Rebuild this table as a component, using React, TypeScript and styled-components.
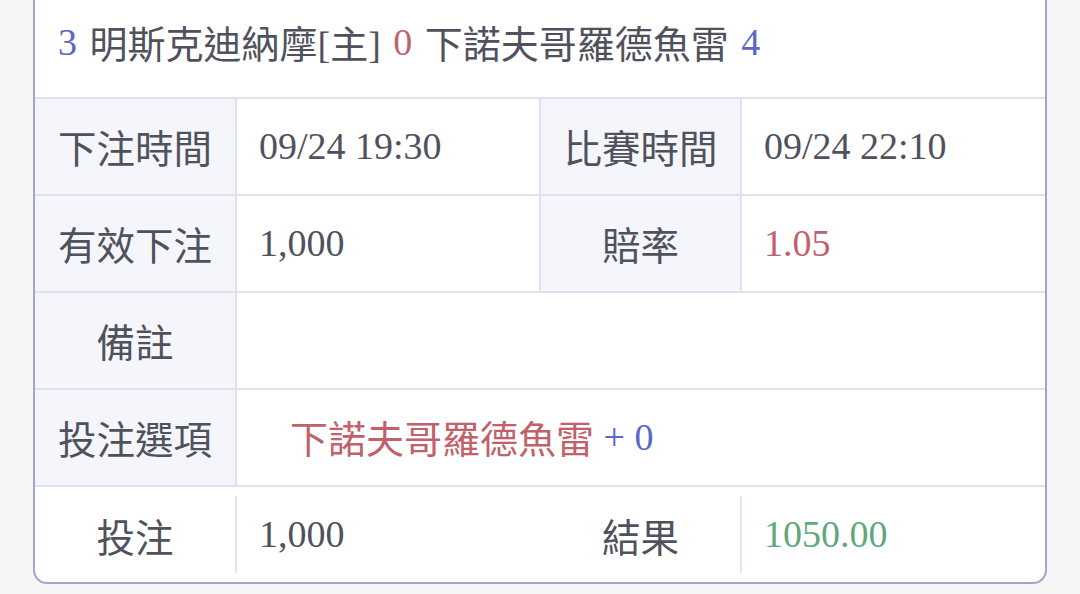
import styled, {createGlobalStyle} from 'styled-components';

const GlobalStyle = createGlobalStyle`
    body {
        margin: 0;
        background: #f6f6f7;
        font-family: "Liberation Serif", "Noto Sans CJK TC", serif;
        color: #4f525c;
    }
`;

type Tone = 'plain' | 'red' | 'blue' | 'green';

const toneColor: Record<Tone, string> = {
    plain: '#4f525c',
    red: '#c0616b',
    blue: '#5a68c8',
    green: '#5ea97b',
};

const App = () => {
    return (
        <>
            <GlobalStyle/>
            <Card>
                <MatchHeader>
                    <Score tone="blue">3</Score> 明斯克迪納摩[主] <Score tone="red">0</Score> 下諾夫哥羅德魚雷{' '}
                    <Score tone="blue">4</Score>
                </MatchHeader>

                <Row>
                    <Label>下注時間</Label>
                    <Value divided>09/24 19:30</Value>
                    <Label>比賽時間</Label>
                    <Value>09/24 22:10</Value>
                </Row>

                <Row>
                    <Label>有效下注</Label>
                    <Value divided>1,000</Value>
                    <Label>賠率</Label>
                    <Value tone="red">1.05</Value>
                </Row>

                <Row>
                    <Label>備註</Label>
                    <Value span={3}/>
                </Row>

                <Row>
                    <Label>投注選項</Label>
                    <Value span={3} indent={53}>
                        <Score tone="red">下諾夫哥羅德魚雷</Score>&nbsp;<Score tone="blue">+ 0</Score>
                    </Value>
                </Row>

                <Row>
                    <SummaryLabel divided>投注</SummaryLabel>
                    <SummaryValue>1,000</SummaryValue>
                    <SummaryLabel divided>結果</SummaryLabel>
                    <SummaryValue tone="green">1050.00</SummaryValue>
                </Row>
            </Card>
        </>
    );
};

export default App;

// 스타일링
const Card = styled.div`
    width: 1014px;
    box-sizing: border-box;
    margin-left: 33px;
    background: #ffffff;
    border: 2px solid #a0a5cb;
    border-top: none;
    border-radius: 0 0 14px 14px;
    overflow: hidden;
`;

const MatchHeader = styled.div`
    height: 97px;
    box-sizing: border-box;
    display: flex;
    align-items: center;
    white-space: pre;
    word-spacing: 3px;
    padding: 0 0 14px 23px;
    font-size: 38px;
    color: #4f525c;
`;

const Score = styled.span<{tone: Tone}>`
    color: ${(p) => toneColor[p.tone]};
`;

const Row = styled.div`
    display: grid;
    grid-template-columns: 202px 304px 201px 1fr;
    height: 97px;
    box-sizing: border-box;
    padding-bottom: 2px;
    border-top: 2px solid #dfe1ef;
`;

const Label = styled.div`
    display: flex;
    align-items: center;
    justify-content: center;
    background: #f5f6fb;
    border-right: 2px solid #dfe1ef;
    margin-bottom: -2px;
    padding-bottom: 2px;
    font-size: 38.5px;
    color: #4f525c;
`;

const Value = styled.div<{tone?: Tone; span?: number; indent?: number; divided?: boolean}>`
    display: flex;
    align-items: center;
    grid-column: span ${(p) => p.span ?? 1};
    padding-left: ${(p) => p.indent ?? 22}px;
    border-right: ${(p) => (p.divided ? '2px solid #dfe1ef' : 'none')};
    margin-bottom: -2px;
    padding-bottom: 2px;
    font-size: 38px;
    white-space: pre;
    color: ${(p) => toneColor[p.tone ?? 'plain']};
`;

const SummaryLabel = styled.div<{divided?: boolean}>`
    display: flex;
    align-items: center;
    justify-content: center;
    margin: 9px 0 7px;
    border-right: ${(p) => (p.divided ? '2px solid #e2e4f0' : 'none')};
    font-size: 38.5px;
    color: #4f525c;
`;

const SummaryValue = styled.div<{tone?: Tone}>`
    display: flex;
    align-items: center;
    padding-left: 22px;
    font-size: 38px;
    color: ${(p) => toneColor[p.tone ?? 'plain']};
`;
